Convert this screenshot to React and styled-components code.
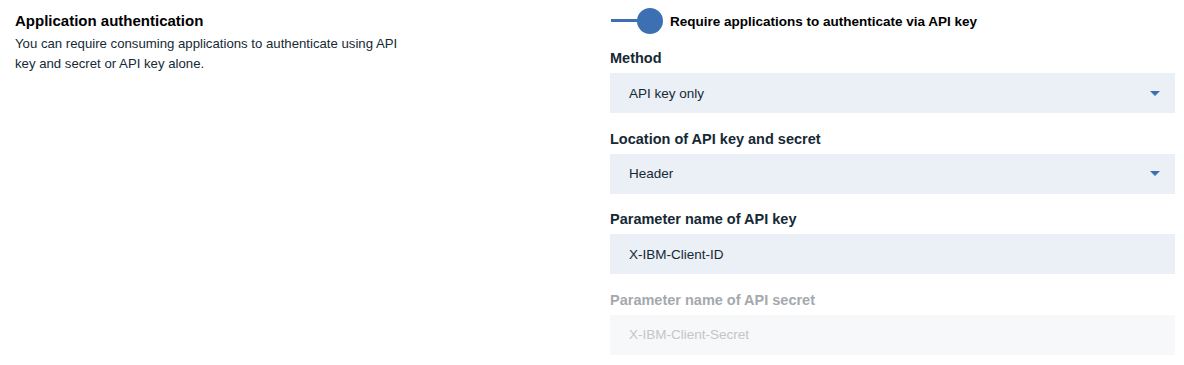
import React from 'react';
import styled, {createGlobalStyle} from 'styled-components';

const GlobalStyle = createGlobalStyle`
  body {
    margin:0;
    background:#ffffff;
    font-family:"Liberation Sans", Arial, sans-serif;
    color:#152935;
  }
`;

const Page = styled.div`
  display:grid;
  grid-template-columns:1fr 565px;
  padding:8px 9px 10px 15px;
`;

const Intro = styled.div`
  padding-top:3px;
`;

const Heading = styled.h3`
  margin:0;
  font-size:15px;
  line-height:20px;
  font-weight:bold;
  color:#000;
`;

const Description = styled.p`
  margin:3px 0 0;
  max-width:395px;
  font-size:13.2px;
  line-height:20px;
  color:#152935;
`;

const Form = styled.div`
  display:flex;
  flex-direction:column;
`;

const ToggleRow = styled.label`
  display:flex;
  align-items:center;
  gap:8px;
  height:26px;
  margin-bottom:14px;
  font-size:13.5px;
  font-weight:bold;
  color:#000;
`;

const Toggle = styled.span`
  position:relative;
  width:52px;
  height:26px;
  &::before {
    content:'';
    position:absolute;
    left:1px;
    top:11px;
    width:30px;
    height:3px;
    background:#3d70b2;
  }
  &::after {
    content:'';
    position:absolute;
    left:27px;
    top:0;
    width:26px;
    height:26px;
    border-radius:50%;
    background:#3d70b2;
  }
`;

const Field = styled.div`
  display:flex;
  flex-direction:column;
  gap:5px;
  & + & {
    margin-top:15.67px;
  }
`;

const Label = styled.div`
  font-size:14.5px;
  line-height:20px;
  font-weight:bold;
  color:${p => p.disabled ? '#a5a9ad' : '#152935'};
`;

const Box = styled.div`
  display:flex;
  align-items:center;
  justify-content:space-between;
  height:40px;
  padding:0 15px 0 19px;
  box-sizing:border-box;
  font-size:13.5px;
  background:${p => p.disabled ? '#f7f8fa' : '#ebeff6'};
  color:${p => p.disabled ? '#c3c6c9' : '#152935'};
`;

const Caret = styled.span`
  width:0;
  height:0;
  border-left:5px solid transparent;
  border-right:5px solid transparent;
  border-top:5px solid #3d70b2;
`;

const fields = [
  {label:'Method', value:'API key only', select:true},
  {label:'Location of API key and secret', value:'Header', select:true},
  {label:'Parameter name of API key', value:'X-IBM-Client-ID'},
  {label:'Parameter name of API secret', value:'X-IBM-Client-Secret', disabled:true},
];

const App = () => {
  return(
    <>
      <GlobalStyle />
      <Page>
        <Intro>
          <Heading>Application authentication</Heading>
          <Description>
            You can require consuming applications to authenticate using API key and secret or API key alone.
          </Description>
        </Intro>
        <Form>
          <ToggleRow>
            <Toggle />
            Require applications to authenticate via API key
          </ToggleRow>
          {fields.map(f => (
            <Field key={f.label}>
              <Label disabled={f.disabled}>{f.label}</Label>
              <Box disabled={f.disabled}>
                {f.value}
                {f.select && <Caret />}
              </Box>
            </Field>
          ))}
        </Form>
      </Page>
    </>
  )
}

export default App;
